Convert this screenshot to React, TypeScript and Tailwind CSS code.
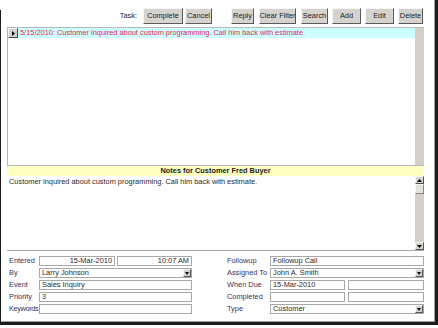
import React from "react";

const Btn = ({ label, w, ml = "ml-[4px]" }: { label: string; w: string; ml?: string }) => (
  <button
    type="button"
    className={`${w} ${ml} shrink-0 h-[16px] px-0 whitespace-nowrap bg-[#d6d3ce] border border-t-[#f5f5f5] border-l-[#f5f5f5] border-r-[#5a5a5a] border-b-[#5a5a5a] text-[7.4px] leading-none text-[#222] flex items-center justify-center`}
  >
    {label}
  </button>
);

const Field = ({ value, w, right = false }: { value: string; w: string; right?: boolean }) => (
  <div
    className={`${w} shrink-0 h-[10px] border border-[#a8a8a8] bg-white text-[7.4px] leading-[8px] text-[#2a2a2a] px-[2px] truncate ${right ? "text-right" : ""}`}
  >
    {value}
  </div>
);

const Select = ({ value, w }: { value: string; w: string }) => (
  <div className={`${w} shrink-0 h-[10px] border border-[#a8a8a8] bg-white flex items-center`}>
    <span className="flex-1 text-[7.4px] leading-[8px] text-[#2a2a2a] px-[2px] truncate">{value}</span>
    <span className="w-[8px] h-[8px] bg-[#d6d3ce] border border-t-[#f5f5f5] border-l-[#f5f5f5] border-r-[#555] border-b-[#555] flex items-center justify-center">
      <svg width="4" height="3" viewBox="0 0 4 3">
        <path d="M0 0h4L2 3z" fill="#000" />
      </svg>
    </span>
  </div>
);

const Label = ({ text, w, tight = false }: { text: string; w: string; tight?: boolean }) => (
  <span
    className={`${w} shrink-0 text-[7.4px] leading-[10px] text-[#3b3158] whitespace-nowrap ${tight ? "tracking-[-0.4px]" : ""}`}
  >
    {text}
  </span>
);

const ArrowBox = ({ up }: { up: boolean }) => (
  <div className="w-[9px] h-[8px] bg-[#d6d3ce] border border-t-[#f5f5f5] border-l-[#f5f5f5] border-r-[#555] border-b-[#555] flex items-center justify-center">
    <svg width="5" height="3" viewBox="0 0 5 3">
      <path d={up ? "M0 3h5L2.5 0z" : "M0 0h5L2.5 3z"} fill="#000" />
    </svg>
  </div>
);

export default function App() {
  return (
    <div className="w-[438px] h-[328px] bg-white font-['Liberation_Sans',Arial,sans-serif]">
      <div className="h-[325px] flex">
        <div className="w-[2px] mt-[10px] bg-[#1c1c1c]" />
        <div className="flex-1 border-r-[3px] border-b-[3px] border-[#1c1c1c] shadow-[inset_-1px_-1px_0_#a0a0a0] flex flex-col pl-[6px] pr-[11px]">
          {/* toolbar */}
          <div className="h-[27px] pt-[8px] pr-[1px] flex items-start justify-end">
            <span className="mt-[4px] text-[7.4px] leading-none text-[#222]">Task:</span>
            <Btn label="Complete" w="w-[40px]" ml="ml-[6px]" />
            <Btn label="Cancel" w="w-[27px]" ml="ml-[2px]" />
            <Btn label="Reply" w="w-[23px]" ml="ml-[19px]" />
            <Btn label="Clear Filter" w="w-[37px]" ml="ml-[5px]" />
            <Btn label="Search" w="w-[27px]" ml="ml-[5px]" />
            <Btn label="Add" w="w-[29px]" />
            <Btn label="Edit" w="w-[29px]" />
            <Btn label="Delete" w="w-[25px]" />
          </div>

          {/* list */}
          <div className="h-[138px] border-t border-l border-[#b8b8b8] flex">
            <div className="flex-1">
              <div className="h-[10px] flex">
                <div className="w-[10px] h-[10px] bg-[#d6d3ce] border border-t-[#f5f5f5] border-l-[#f5f5f5] border-r-[#444] border-b-[#444] flex items-center justify-center">
                  <svg width="3" height="5" viewBox="0 0 3 5">
                    <path d="M0 0v5l3-2.5z" fill="#000" />
                  </svg>
                </div>
                <div className="flex-1 bg-[#ccffff] text-[7.4px] leading-[10px] text-[#e3264f] pl-[2px] whitespace-nowrap">
                  5/15/2010: Customer inquired about custom programming. Call him back with estimate.
                </div>
              </div>
            </div>
            <div className="w-[9px] bg-[#d4d0c8]" />
          </div>

          {/* notes header */}
          <div className="h-[11px] border-t border-[#b8b8b8] bg-[#ffffc2] text-center text-[7.4px] leading-[10px] font-bold text-[#1a1a1a]">
            Notes for Customer Fred Buyer
          </div>

          {/* notes body */}
          <div className="h-[75px] border-b border-[#a8a8a8] flex">
            <div className="flex-1 text-[7.4px] leading-[9px] text-[#2a2a2a] pl-[2px] pt-[1px]">
              Customer inquired about custom programming. Call him back with estimate.
            </div>
            <div className="w-[9px] bg-[#d4d0c8] flex flex-col">
              <ArrowBox up />
              <div className="h-[10px] bg-[#e4e2dc] border border-t-[#f5f5f5] border-l-[#f5f5f5] border-r-[#888] border-b-[#888]" />
              <div className="flex-1" />
              <ArrowBox up={false} />
            </div>
          </div>

          {/* form */}
          <div className="pt-[5px] pl-[2px] flex">
            <div className="w-[183px] flex flex-col gap-[2px]">
              <div className="flex">
                <Label text="Entered" w="w-[30px]" />
                <Field value="15-Mar-2010" w="w-[76px]" right />
                <div className="w-[2px]" />
                <Field value="10:07 AM" w="w-[75px]" right />
              </div>
              <div className="flex">
                <Label text="By" w="w-[30px]" />
                <Select value="Larry Johnson" w="w-[153px]" />
              </div>
              <div className="flex">
                <Label text="Event" w="w-[30px]" />
                <Field value="Sales Inquiry" w="w-[153px]" />
              </div>
              <div className="flex">
                <Label text="Priority" w="w-[30px]" />
                <Field value="3" w="w-[153px]" />
              </div>
              <div className="flex">
                <Label text="Keywords" w="w-[30px]" tight />
                <Field value="" w="w-[153px]" />
              </div>
            </div>
            <div className="ml-[35px] w-[197px] flex flex-col gap-[2px]">
              <div className="flex">
                <Label text="Followup" w="w-[43px]" />
                <Field value="Followup Call" w="w-[154px]" />
              </div>
              <div className="flex">
                <Label text="Assigned To" w="w-[43px]" />
                <Select value="John A. Smith" w="w-[154px]" />
              </div>
              <div className="flex">
                <Label text="When Due" w="w-[43px]" />
                <Field value="15-Mar-2010" w="w-[75px]" />
                <div className="w-[3px]" />
                <Field value="" w="w-[76px]" />
              </div>
              <div className="flex">
                <Label text="Completed" w="w-[43px]" />
                <Field value="" w="w-[75px]" />
                <div className="w-[3px]" />
                <Field value="" w="w-[76px]" />
              </div>
              <div className="flex">
                <Label text="Type" w="w-[43px]" />
                <Select value="Customer" w="w-[154px]" />
              </div>
            </div>
          </div>
        </div>
      </div>
    </div>
  );
}
